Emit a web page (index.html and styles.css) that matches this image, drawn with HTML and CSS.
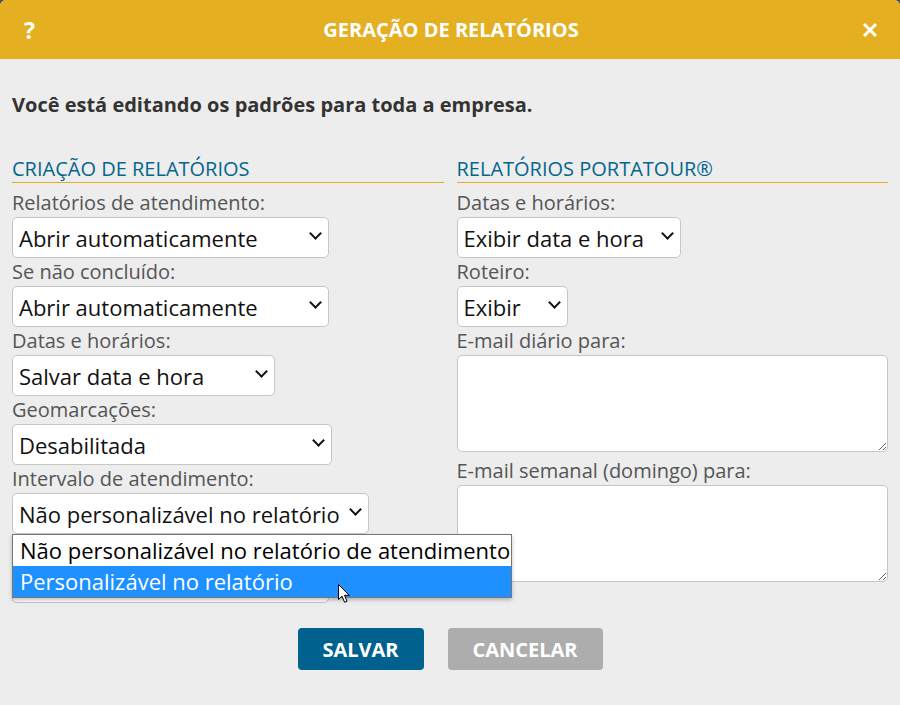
FILE: index.html
```html
<!DOCTYPE html>
<html>
    <head>
        <title>Geração de relatórios</title>
        <link rel="stylesheet" href="styles.css">
    </head>
    <body>
        <div class="dialog">
            <div class="dialog-header">
                <span class="help">?</span>
                <h1>GERAÇÃO DE RELATÓRIOS</h1>
                <span class="close">
                    <svg width="16" height="16" viewBox="0 0 16 16"><path d="M2 2 L14 14 M14 2 L2 14" stroke="#fff" stroke-width="3" fill="none"/></svg>
                </span>
            </div>
            <div class="dialog-body">
                <p class="notice">Você está editando os padrões para toda a empresa.</p>

                <div class="columns">
                    <div class="col">
                        <h2>CRIAÇÃO DE RELATÓRIOS</h2>

                        <label>Relatórios de atendimento:</label>
                        <div class="select w-316"><span>Abrir automaticamente</span></div>

                        <label>Se não concluído:</label>
                        <div class="select w-316"><span>Abrir automaticamente</span></div>

                        <label>Datas e horários:</label>
                        <div class="select w-262"><span>Salvar data e hora</span></div>

                        <label>Geomarcações:</label>
                        <div class="select w-319"><span>Desabilitada</span></div>

                        <label>Intervalo de atendimento:</label>
                        <div class="select w-356 open">
                            <span>Não personalizável no relatório</span>
                            <ul class="popup">
                                <li>Não personalizável no relatório de atendimento</li>
                                <li class="active">Personalizável no relatório</li>
                                <svg class="cursor" width="13" height="20" viewBox="0 0 13 20"><path d="M0.5 0.5 L0.5 15.5 L4 12.2 L6.6 18.3 L9 17.3 L6.5 11.3 L11.3 11.3 Z" fill="#fff" stroke="#000" stroke-width="1"/></svg>
                            </ul>
                        </div>

                        <label>Exibir no aplicativo:</label>
                        <div class="select w-316"><span>Abrir automaticamente</span></div>
                    </div>

                    <div class="col">
                        <h2>RELATÓRIOS PORTATOUR®</h2>

                        <label>Datas e horários:</label>
                        <div class="select w-223"><span>Exibir data e hora</span></div>

                        <label>Roteiro:</label>
                        <div class="select w-110"><span>Exibir</span></div>

                        <label>E-mail diário para:</label>
                        <textarea></textarea>

                        <label>E-mail semanal (domingo) para:</label>
                        <textarea></textarea>
                    </div>
                </div>

                <div class="actions">
                    <button class="btn btn-save">SALVAR</button>
                    <button class="btn btn-cancel">CANCELAR</button>
                </div>
            </div>
        </div>
    </body>
</html>
```

FILE: styles.css
```css
html {
  background: #4d4d4d;
}

body {
  margin: 0;
  font-family: "Open Sans", "Liberation Sans", sans-serif;
  color: #555;
}

.dialog {
  width: 900px;
  height: 705px;
  background: #ededed;
  border-radius: 6px 6px 0 0;
  overflow: hidden;
}

.dialog-header {
  height: 59px;
  background: #e5af22;
  display: flex;
  align-items: center;
  padding: 0 22px 0 24px;
  color: #fff;
}

.dialog-header h1 {
  flex: 1;
  margin: 0;
  text-align: center;
  font-size: 20px;
  font-weight: 700;
}

.help {
  font-size: 23px;
  font-weight: 700;
  width: 16px;
}

.close {
  width: 16px;
  height: 16px;
  display: flex;
}

.dialog-body {
  padding: 0 12px;
}

.notice {
  margin: 32px 0 0;
  font-size: 20px;
  font-weight: 700;
  color: #333;
  line-height: 27px;
}

.columns {
  display: grid;
  grid-template-columns: 1fr 1fr;
  gap: 13px;
  margin-top: 37px;
}

.col h2 {
  margin: 0;
  font-size: 20px;
  font-weight: 400;
  color: #04668f;
  line-height: 27px;
  border-bottom: 1px solid #e5af22;
}

.col label {
  display: block;
  font-size: 20px;
  line-height: 27px;
  margin-bottom: 1px;
}

.col h2 + label {
  margin-top: 6px;
}

.select {
  position: relative;
  height: 41px;
  background: #fff;
  border: 1px solid #c6c6c6;
  border-radius: 5px;
  display: flex;
  align-items: center;
  padding: 0 6px;
  box-sizing: border-box;
  font-size: 22px;
  color: #111;
}

.select::after {
  content: "";
  position: absolute;
  right: 8px;
  top: 11px;
  width: 7px;
  height: 7px;
  border-right: 2px solid #111;
  border-bottom: 2px solid #111;
  transform: rotate(45deg);
}

.w-316 { width: 317px; }
.w-262 { width: 263px; }
.w-319 { width: 320px; }
.w-356 { width: 357px; }
.w-223 { width: 224px; }
.w-110 { width: 111px; }

.popup {
  position: absolute;
  left: -1px;
  top: calc(100% + 1px);
  width: 500px;
  margin: 0;
  padding: 0;
  list-style: none;
  background: #fff;
  border: 1px solid #767676;
  box-shadow: 0 2px 4px rgba(0, 0, 0, 0.25);
  box-sizing: border-box;
  z-index: 2;
}

.popup li {
  height: 31px;
  line-height: 31px;
  padding-left: 7px;
  font-size: 22px;
  color: #000;
  white-space: nowrap;
}

.popup li.active {
  background: #1e90ff;
  color: #fff;
}

.cursor {
  position: absolute;
  left: 325px;
  top: 49px;
}

textarea {
  display: block;
  width: 100%;
  height: 97px;
  box-sizing: border-box;
  border: 1px solid #c6c6c6;
  border-radius: 5px;
  background: #fff;
  margin: 0 0 5px;
}

.actions {
  display: flex;
  justify-content: center;
  gap: 24px;
  margin-top: 25px;
}

.btn {
  height: 42px;
  border: 0;
  border-radius: 4px;
  color: #fff;
  font-family: "Open Sans", "Liberation Sans", sans-serif;
  font-size: 20px;
  font-weight: 700;
  padding: 0;
}

.btn-save {
  background: #00618f;
  width: 126px;
}

.btn-cancel {
  background: #adadad;
  width: 155px;
}
```
